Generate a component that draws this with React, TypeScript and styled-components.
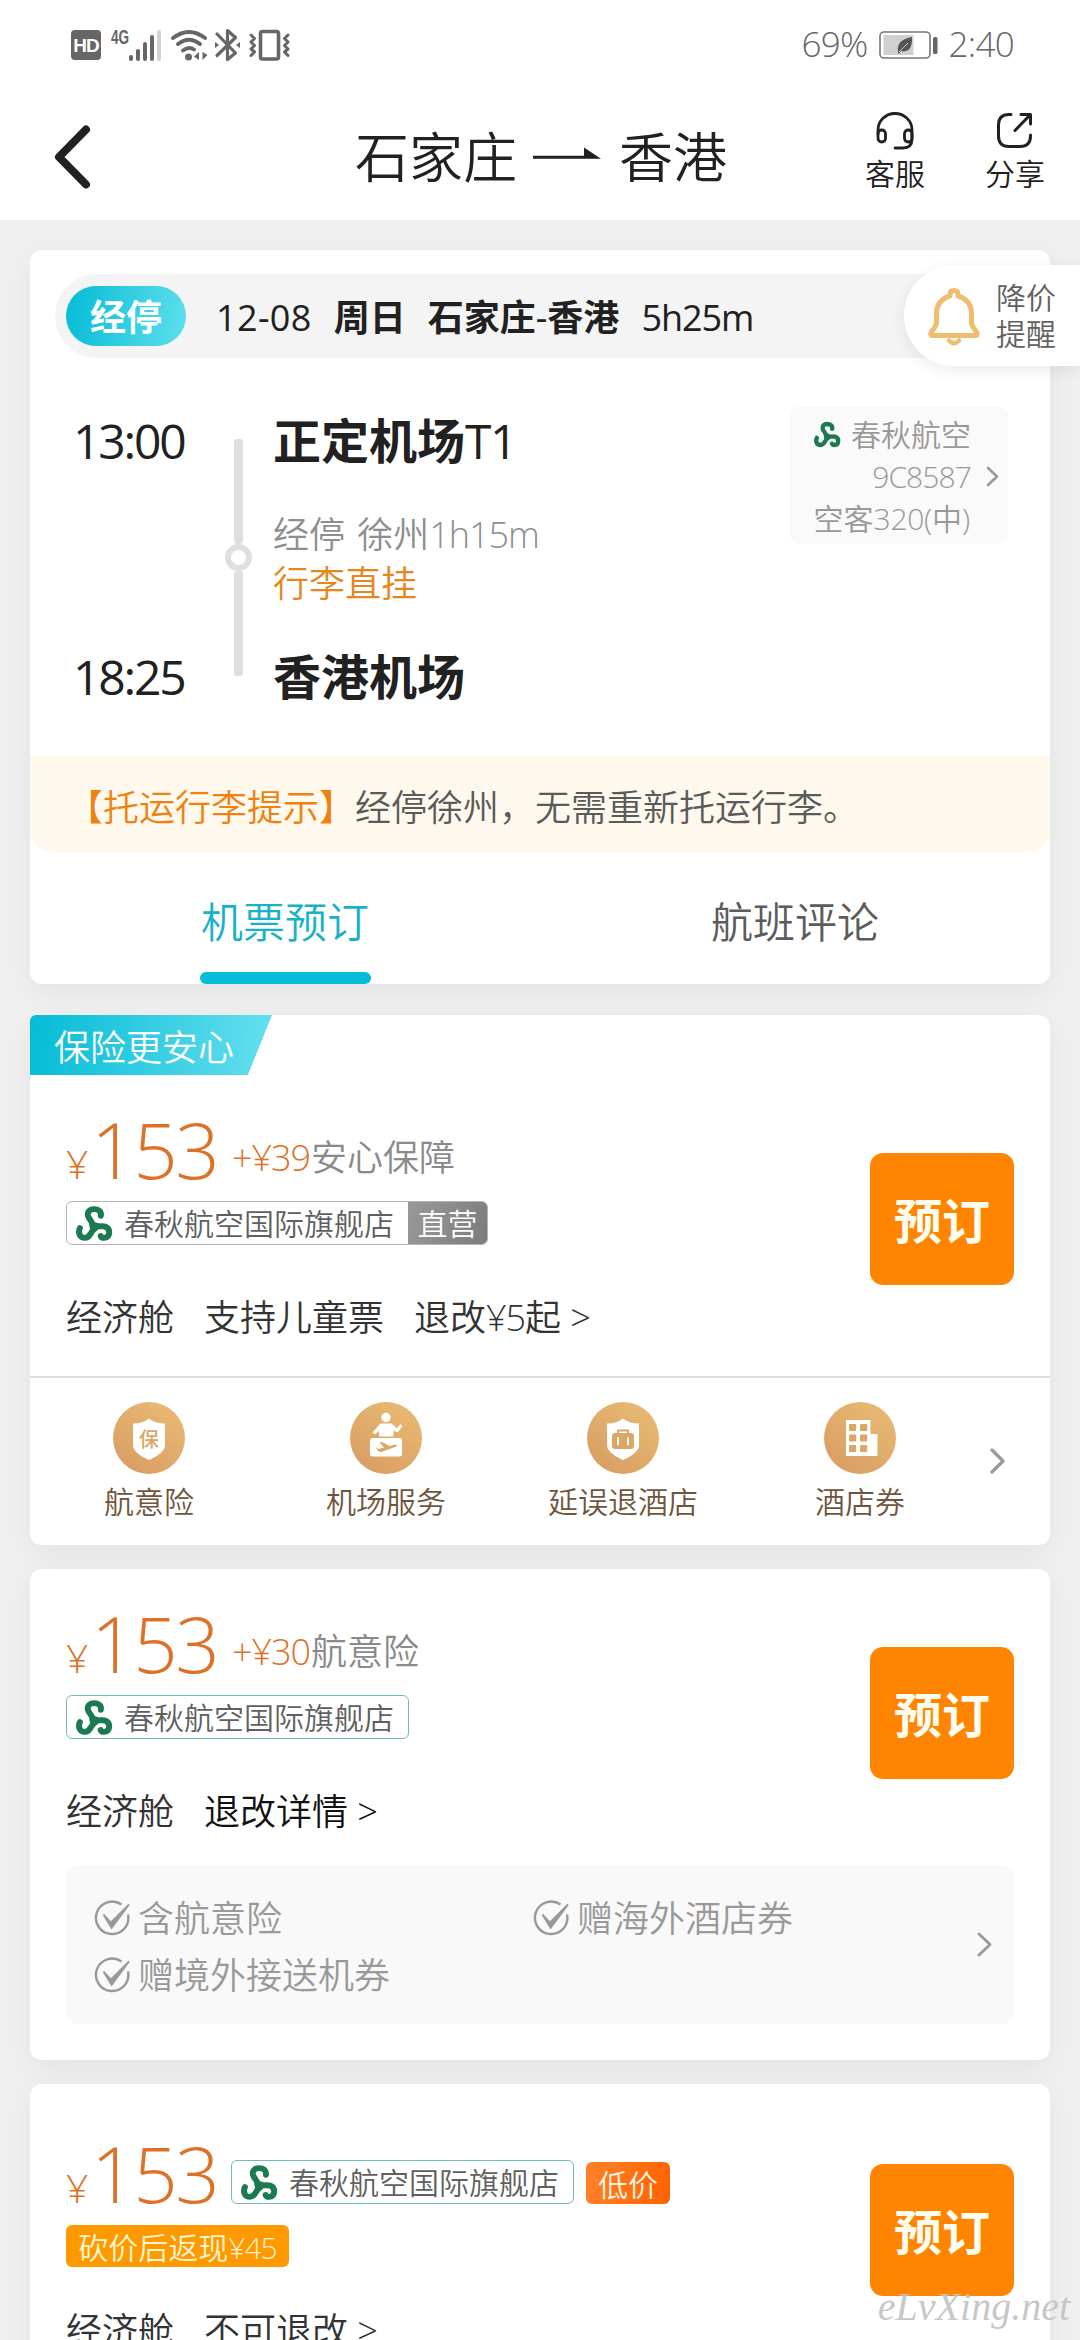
import React from "react";
import styled, { createGlobalStyle, css } from "styled-components";

const Global = createGlobalStyle`
  * { box-sizing: border-box; }
  html, body { margin: 0; background: #f0f0f0; }
  body {
    font-family: "Open Sans", "Noto Sans CJK SC", sans-serif;
    font-weight: 350;
    color: #212121;
    white-space: nowrap;
  }
`;

const Screen = styled.div`
  width: 1080px;
  height: 2340px;
  overflow: hidden;
  position: relative;
  background: #f0f0f0;
`;

const Num = styled.span<{ $track?: number }>`
  letter-spacing: ${(p) => p.$track ?? -0.03}em;
`;

/* ---------- status bar ---------- */

const StatusBar = styled.div`
  height: 90px;
  background: #fff;
  display: flex;
  align-items: center;
  justify-content: space-between;
  padding: 0 66px 0 71px;
  color: #666;
  font-size: 35px;
  font-weight: 300;
`;

const StatusGroup = styled.div`
  display: flex;
  align-items: center;
  line-height: 48px;
`;

const StatusText = styled.span`
  letter-spacing: -0.02em;
  padding-bottom: 2px;
`;

const HdBox = styled.div`
  width: 30px;
  height: 30px;
  border-radius: 4px;
  background: #666;
  color: #fff;
  font: 700 19px/31px "Liberation Sans", sans-serif;
  text-align: center;
  letter-spacing: -1px;
`;

const Network = styled.div`
  font: 700 20px/16px "Liberation Sans", sans-serif;
  width: 18px;
  margin: 0 0 17px 10px;
  transform: scaleX(0.68);
  transform-origin: left;
`;

const BatteryGap = styled.div`
  display: flex;
  margin: 0 10px 0 11px;
`;

/* ---------- header ---------- */

const Header = styled.header`
  height: 130px;
  background: #fff;
  display: flex;
  align-items: center;
  padding: 3px 35px 0 53px;
`;

const Title = styled.h1`
  flex: 1;
  margin: 0 0 0 263px;
  display: flex;
  align-items: center;
  gap: 16px;
  font-size: 54px;
  font-weight: 350;
  line-height: 70px;
`;

const Actions = styled.div`
  display: flex;
  gap: 60px;
  margin-bottom: 10px;
`;

const Action = styled.div`
  width: 60px;
  display: flex;
  flex-direction: column;
  align-items: center;
  font-size: 30px;
  line-height: 36px;
  gap: 6px;
`;

/* ---------- cards ---------- */

const Content = styled.main`
  padding: 30px 30px 0;
  display: flex;
  flex-direction: column;
`;

const Card = styled.section<{ $height: number; $gap: number }>`
  height: ${(p) => p.$height}px;
  margin-bottom: ${(p) => p.$gap}px;
  flex: none;
  background: #fff;
  border-radius: 12px;
  box-shadow: 0 8px 30px rgba(0, 0, 0, 0.06);
`;

const SummaryWrap = styled.div`
  padding-top: 24px;
`;

const Summary = styled.div`
  margin-left: 25px;
  height: 84px;
  border-radius: 42px 0 0 42px;
  background: #f4f4f4;
  display: flex;
  align-items: center;
  padding-left: 11px;
  font-size: 36px;
  line-height: 60px;
  font-weight: 400;
  b { font-weight: 700; }
`;

const StopBadge = styled.span`
  width: 120px;
  height: 60px;
  border-radius: 30px;
  background: linear-gradient(100deg, #04bcd6, #5fdfec);
  color: #fff;
  font-weight: 700;
  line-height: 63px;
  text-align: center;
  margin-right: 30px;
`;

const SummaryPart = styled.span<{ $left?: number }>`
  margin-left: ${(p) => p.$left ?? 0}px;
  padding-top: 3px;
`;

const Route = styled.div`
  height: 398px;
  display: flex;
  padding-top: 48px;
`;

const Times = styled.div`
  width: 195px;
  padding-left: 43px;
  font-size: 48px;
  line-height: 70px;
  font-weight: 400;
  div + div { margin-top: 166px; }
`;

const Rail = styled.div`
  width: 27px;
  margin-top: 33px;
  display: flex;
  flex-direction: column;
  align-items: center;
`;

const RailLine = styled.i`
  width: 9px;
  height: 105px;
  border-radius: 3px;
  background: #dfdfdf;
`;

const RailDot = styled.i`
  width: 27px;
  height: 27px;
  border-radius: 50%;
  border: 6px solid #dfdfdf;
`;

const Stops = styled.div`
  margin-left: 21px;
  flex: 1;
`;

const Airport = styled.div`
  font-size: 48px;
  line-height: 70px;
  font-weight: 700;
  ${Num} { font-weight: 400; }
`;

const StopInfo = styled.div`
  height: 166px;
  padding-top: 34px;
  font-size: 36px;
  line-height: 49px;
  word-spacing: 3px;
  color: #8e8e8e;
`;

const Through = styled.div`
  color: #e6861c;
`;

const FlightBox = styled.div`
  width: 219px;
  height: 138px;
  margin-right: 42px;
  border-radius: 12px;
  background: #fafafa;
  display: flex;
  align-items: center;
  justify-content: flex-end;
  gap: 15px;
  padding: 3px 9px 0 0;
  color: #999;
  font-size: 30px;
  line-height: 42px;
`;

const FlightText = styled.div`
  text-align: right;
`;

const AirlineLine = styled.div`
  display: flex;
  align-items: center;
  justify-content: flex-end;
  gap: 10px;
`;

const Notice = styled.div`
  height: 97px;
  border-radius: 0 0 24px 24px;
  background: #fff8ec;
  padding-left: 37px;
  font-size: 36px;
  line-height: 103px;
  color: #5a5a5a;
  em { font-style: normal; color: #ee8110; }
`;

const Tabs = styled.div`
  display: grid;
  grid-template-columns: 1fr 1fr;
  height: 131px;
`;

const Tab = styled.div<{ $active?: boolean }>`
  display: flex;
  flex-direction: column;
  align-items: center;
  justify-content: space-between;
  font-size: 42px;
  line-height: 137px;
  height: 131px;
  color: ${(p) => (p.$active ? "#18b2c6" : "#5c5c5c")};
`;

const TabLabel = styled.span`
  height: 119px;
`;

const TabBar = styled.i`
  width: 171px;
  height: 12px;
  border-radius: 6px;
  background: #04bcd6;
`;

/* ---------- price alert ---------- */

const PriceAlert = styled.aside`
  position: absolute;
  right: 0;
  top: 265px;
  width: 176px;
  height: 101px;
  border-radius: 51px 0 0 51px;
  background: #fff;
  box-shadow: 0 4px 16px rgba(0, 0, 0, 0.08);
  display: flex;
  align-items: center;
  gap: 15px;
  padding-left: 23px;
  font-size: 30px;
  line-height: 36px;
  color: #616161;
`;

/* ---------- offers ---------- */

const Ribbon = styled.div`
  width: 242px;
  height: 60px;
  border-radius: 6px 0 0 0;
  background: linear-gradient(95deg, #04bcd6, #66dfef);
  clip-path: polygon(0 0, 100% 0, 90% 100%, 0 100%);
  color: #fff;
  padding-left: 24px;
  font-size: 36px;
  line-height: 66px;
`;

const OfferBody = styled.div`
  display: flex;
  justify-content: space-between;
  padding: 0 36px;
`;

const OfferMain = styled.div<{ $top: number }>`
  padding-top: ${(p) => p.$top}px;
`;

const PriceRow = styled.div`
  height: 72px;
  display: flex;
  align-items: baseline;
  line-height: 72px;
  color: #dd7127;
  font-size: 36px;
`;

const Yen = styled.span`
  width: 25px;
  font-size: 39px;
  font-weight: 300;
`;

const Amount = styled.span`
  width: 140px;
  font-size: 78px;
  letter-spacing: -0.03em;
`;

const Extra = styled.span`
  position: relative;
  bottom: 8px;
  padding-left: 1px;
`;

const Muted = styled.span`
  color: #8a8a8a;
  padding-left: 1px;
`;

const StoreTag = styled.div<{ $tone: string; $inline?: boolean }>`
  display: flex;
  width: fit-content;
  height: 44px;
  border: 1.5px solid ${(p) => p.$tone};
  border-radius: 6px;
  overflow: hidden;
  font-size: 30px;
  line-height: 43px;
  color: #5f5f5f;
  ${(p) =>
    p.$inline
      ? css`align-self: flex-end; margin-bottom: 5px;`
      : css`margin-top: 16px;`}
`;

const StoreName = styled.span`
  display: flex;
  align-items: center;
  gap: 11px;
  padding: 0 14px 0 9px;
`;

const Direct = styled.span`
  width: 79px;
  text-align: center;
  color: #fff;
  background: linear-gradient(110deg, #999, #7c7c7c);
`;

const LowPrice = styled.span`
  align-self: flex-end;
  margin: 0 0 5px 12px;
  width: 84px;
  height: 42px;
  border-radius: 6px;
  text-align: center;
  font-size: 30px;
  line-height: 45px;
  color: #fff3e2;
  background: linear-gradient(100deg, #ff8129, #ff6200);
`;

const Cashback = styled.div`
  width: 223px;
  height: 42px;
  margin-top: 16px;
  border-radius: 6px;
  background: #ff9900;
  color: #fff6cf;
  text-align: center;
  font-size: 30px;
  line-height: 45px;
`;

const Details = styled.div<{ $top: number; $dark?: boolean }>`
  display: flex;
  gap: 30px;
  margin-top: ${(p) => p.$top}px;
  font-size: 36px;
  line-height: 50px;
  color: #333;
  > span:last-child { color: ${(p) => (p.$dark ? "#111" : "#333")}; }
`;

const Book = styled.button<{ $top: number }>`
  width: 144px;
  height: 132px;
  margin: ${(p) => p.$top}px 0 0;
  padding: 4px 0 0;
  border: 0;
  border-radius: 13px;
  background: #ff8500;
  color: #fffdf0;
  font: 700 48px/60px "Open Sans", "Noto Sans CJK SC", sans-serif;
`;

const Services = styled.div`
  margin-top: 33px;
  height: 169px;
  border-top: 2px solid #dedede;
  display: flex;
  align-items: flex-start;
  padding: 24px 45px 0 0.5px;
`;

const Service = styled.div`
  width: 237px;
  display: flex;
  flex-direction: column;
  align-items: center;
  gap: 8px;
  font-size: 30px;
  line-height: 40px;
  color: #6f553c;
`;

const Disc = styled.div`
  width: 72px;
  height: 72px;
  border-radius: 50%;
  background: linear-gradient(215deg, #eabd74, #d79a62);
  display: flex;
`;

const ServiceArrow = styled.div`
  margin: 46px 0 0 auto;
  display: flex;
`;

const Perks = styled.div`
  margin: 28px 36px 0;
  height: 159px;
  border-radius: 12px;
  background: #f9f9f9;
  display: flex;
  align-items: center;
  padding: 0 22px 0 28px;
`;

const PerkGrid = styled.div`
  flex: 1;
  display: grid;
  grid-template-columns: 439px 1fr;
  grid-auto-rows: 57px;
  padding-top: 4px;
`;

const Perk = styled.div`
  display: flex;
  align-items: center;
  gap: 8px;
  font-size: 36px;
  line-height: 57px;
  color: #999;
`;

const Watermark = styled.div`
  position: absolute;
  right: 10px;
  bottom: 8px;
  color: rgba(196, 196, 196, 0.95);
  font: italic 400 40px/50px "Liberation Serif", serif;
`;

/* ---------- drawings ---------- */

const Logo = ({ w }: { w: number }) => (
  <svg width={w} height={w} viewBox="0 0 36 34" fill="none" stroke="#1b7a50" strokeWidth="5.8" strokeLinecap="round">
    <path d="M24.2 9.5C25 5.2 21.500 3 17.500 3C13 3 10.800 6 11.600 9.600C12.400 13 16.500 15 16 19" />
    <path d="M3.800 21.500C1.800 25.500 3.400 31 8.600 31C14.500 31 13.500 24.500 19 21.500" />
    <path d="M18 18.600C22 21 25 19 28.400 20C34 22 33.500 31 27.400 31C25.400 31 24.400 30.400 24 29.200" />
    <path d="M14 16.500L23 19.500L15 26Z" fill="#1b7a50" strokeWidth="2" />
  </svg>
);

const Chevron = ({ w, h, sw = 3.2 }: { w: number; h: number; sw?: number }) => (
  <svg width={w} height={h} viewBox={`0 0 ${w} ${h}`} fill="none" stroke="#999" strokeWidth={sw} strokeLinecap="round" strokeLinejoin="round">
    <path d={`M2 2L${w - 2} ${h / 2}L2 ${h - 2}`} />
  </svg>
);

const CheckMark = () => (
  <svg width="36" height="36" viewBox="0 0 36 36" fill="none" stroke="#999" strokeWidth="2.4">
    <path d="M27.500 4.600A16.200 16.200 0 1 0 34 14.500" />
    <path d="M9.500 14.500L17 22.500L35 4.500L17.600 28L9.500 14.500Z" fill="#999" strokeWidth="1.8" />
  </svg>
);

const SignalIcons = () => (
  <svg width="161" height="36" viewBox="129 26 161 36" fill="none" stroke="#666" strokeLinecap="round">
    <g strokeWidth="4">
      <path d="M131 56V58M138 50V58M145 43V58M152 36V58" />
      <path d="M159 31V58" stroke="#d2d2d2" />
    </g>
    <g strokeWidth="3.8">
      <path d="M173 37Q189 25 205 37M178 43Q189 34.5 200 43M183 49.5Q189 45 194 48.5" />
    </g>
    <circle cx="188.500" cy="56" r="3.500" fill="#666" stroke="none" />
    <path d="M199 51L194 55.500L199 59ZM202.500 51L207.500 54L202.500 59Z" fill="#666" stroke="none" />
    <path d="M217 33L235.500 52L227.500 58.500V29.500L235.500 36.500L217 54.500" strokeWidth="3.200" strokeLinejoin="round" />
    <path d="M215 41L219 44L215 47ZM240 41L236 44L240 47Z" fill="#666" stroke="none" />
    <rect x="260.500" y="30.500" width="18" height="27.500" rx="2" strokeWidth="3.600" />
    <path d="M251 34L254.500 37.500L251 41L254.500 44.500L251 48L254.500 51L251 54.500M288 34L284.500 37.500L288 41L284.500 44.500L288 48L284.500 51L288 54.500" strokeWidth="3" strokeLinejoin="round" />
  </svg>
);

const Battery = () => (
  <svg width="60" height="30" viewBox="0 0 60 30">
    <rect x="1" y="2" width="50" height="26" rx="4" fill="none" stroke="#777" strokeWidth="1.6" />
    <rect x="4.500" y="5" width="30" height="20" fill="#d0d0d0" />
    <path d="M33 7C33.500 17 30 23 22 21L20 24L19 22.500C17.500 12 24 9 33 7Z" fill="#555" />
    <path d="M20 22Q25 17 29 13" stroke="#d0d0d0" strokeWidth="1" fill="none" />
    <rect x="54" y="7" width="4.500" height="17" rx="1.500" fill="#666" />
  </svg>
);

const BackIcon = () => (
  <svg width="39" height="66" viewBox="0 0 39 66" fill="none" stroke="#212121" strokeWidth="8" strokeLinecap="round" strokeLinejoin="round">
    <path d="M33 5.500L6 33L33 60.500" />
  </svg>
);

const TitleArrow = () => (
  <svg width="70" height="20" viewBox="0 0 70 20" fill="#212121">
    <path d="M0 8.800H51V0.500L68 11.800H0Z" />
  </svg>
);

const Headset = () => (
  <svg width="40" height="38" viewBox="0 0 40 38" fill="none" stroke="#212121" strokeWidth="2.800" strokeLinecap="round">
    <path d="M3 22V18A17 16.500 0 0 1 37 18V27Q37 36 28 36H20" />
    <rect x="3" y="18" width="7.500" height="12" rx="3.700" />
    <rect x="29.500" y="18" width="7.500" height="12" rx="3.700" />
  </svg>
);

const ShareIcon = () => (
  <svg width="38" height="38" viewBox="0 0 38 38" fill="none" stroke="#212121" strokeWidth="3" strokeLinecap="round" strokeLinejoin="round">
    <path d="M15 2.500H13Q2.500 2.500 2.500 13V24Q2.500 34.500 13 34.500H24Q34.500 34.500 34.500 24V23" />
    <path d="M25 2.500H34.500V12M34 3L19 18.500" />
  </svg>
);

const Bell = () => (
  <svg width="54" height="60" viewBox="0 0 54 60" fill="none" stroke="#f0bd70" strokeWidth="5" strokeLinecap="round" strokeLinejoin="round">
    <path d="M23 10V8Q23 4.500 27 4.500Q31 4.500 31 8V10Q44.500 14 44.500 28V37Q45 40.500 49 45Q52 49.500 47.500 49.500H6.500Q2 49.500 5 45Q9 40.500 9.500 37V28Q9.500 14 23 10Z" />
    <path d="M22 54.500Q27 60 32 54.500" strokeWidth="4.500" />
  </svg>
);

const shield = "M36 16.500Q42 21.500 52 21.500V43Q52 51 36 58Q20 51 20 43V21.500Q30 21.500 36 16.500Z";

const ShieldText = styled.text`
  font: 500 20px "Noto Sans CJK SC", sans-serif;
`;

const serviceArt: Record<string, React.ReactNode> = {
  shield: (
    <>
      <path d={shield} fill="#fff" />
      <ShieldText x="36" y="44.500" textAnchor="middle" fill="#dca666">保</ShieldText>
    </>
  ),
  airport: (
    <>
      <circle cx="36" cy="15.500" r="4.700" fill="#fff" />
      <path d="M30.500 22H41.500L47 27L50.500 22.500L52 24L47.500 30L43 27.500V34H29.500V28L25 32L23 30.500Z" fill="#fff" stroke="#fff" strokeLinejoin="round" />
      <rect x="20" y="36" width="32" height="18.500" rx="2.500" fill="#fff" />
      <path d="M26 45L28.500 47L34 45.500L29.500 40.500L32 40L39.500 44L45 42.500Q47.500 42.500 46.500 44.500L31 50Q27.500 50 26 45Z" fill="#dca666" />
    </>
  ),
  luggage: (
    <>
      <path d={shield} fill="#fff" />
      <path d="M31 32V28.500H41V32" fill="none" stroke="#dca666" strokeWidth="2" />
      <rect x="25" y="31" width="22" height="16" rx="3" fill="#dca666" />
      <path d="M31 36V42.500M41 36V42.500" stroke="#fff" strokeWidth="2" strokeLinecap="round" />
    </>
  ),
  hotel: (
    <>
      <path d="M22 18H46.500V32H53.500V54H22Z" fill="#fff" />
      {[22, 32.5, 43].map((y) =>
        [25, 36].map((x) => <rect key={`${x}-${y}`} x={x} y={y} width="7.200" height="7" rx="1" fill="#dca666" />)
      )}
    </>
  ),
};

const services = [
  { art: "shield", label: "航意险" },
  { art: "airport", label: "机场服务" },
  { art: "luggage", label: "延误退酒店" },
  { art: "hotel", label: "酒店券" },
];

const perks = ["含航意险", "赠海外酒店券", "赠境外接送机券"];

const Store = ({ tone, direct, inline }: { tone: string; direct?: boolean; inline?: boolean }) => (
  <StoreTag $tone={tone} $inline={inline}>
    <StoreName>
      <Logo w={37} />
      春秋航空国际旗舰店
    </StoreName>
    {direct && <Direct>直营</Direct>}
  </StoreTag>
);

const Price = () => (
  <>
    <Yen>¥</Yen>
    <Amount>153</Amount>
  </>
);

export default function App() {
  return (
    <Screen>
      <Global />
      <StatusBar>
        <StatusGroup>
          <HdBox>HD</HdBox>
          <Network>4G</Network>
          <SignalIcons />
        </StatusGroup>
        <StatusGroup>
          <StatusText>69%</StatusText>
          <BatteryGap><Battery /></BatteryGap>
          <StatusText>2:40</StatusText>
        </StatusGroup>
      </StatusBar>
      <Header>
        <BackIcon />
        <Title>
          石家庄
          <TitleArrow />
          香港
        </Title>
        <Actions>
          <Action><Headset />客服</Action>
          <Action><ShareIcon />分享</Action>
        </Actions>
      </Header>

      <Content>
        <Card $height={734} $gap={31}>
          <SummaryWrap>
            <Summary>
              <StopBadge>经停</StopBadge>
              <SummaryPart><Num $track={0.01}>12-08</Num></SummaryPart>
              <SummaryPart $left={22}><b>周日</b></SummaryPart>
              <SummaryPart $left={22}><b>石家庄</b>-<b>香港</b></SummaryPart>
              <SummaryPart $left={22}><Num>5h25m</Num></SummaryPart>
            </Summary>
          </SummaryWrap>
          <Route>
            <Times>
              <div><Num $track={-0.045}>13:00</Num></div>
              <div><Num $track={-0.045}>18:25</Num></div>
            </Times>
            <Rail>
              <RailLine />
              <RailDot />
              <RailLine />
            </Rail>
            <Stops>
              <Airport>正定机场<Num>T1</Num></Airport>
              <StopInfo>
                经停 徐州<Num>1h15m</Num>
                <Through>行李直挂</Through>
              </StopInfo>
              <Airport>香港机场</Airport>
            </Stops>
            <FlightBox>
              <FlightText>
                <AirlineLine><Logo w={27} />春秋航空</AirlineLine>
                <div><Num>9C8587</Num></div>
                <div>空客<Num $track={-0.01}>320(</Num>中<Num $track={0.03}>)</Num></div>
              </FlightText>
              <Chevron w={13} h={21} sw={2.6} />
            </FlightBox>
          </Route>
          <Notice><em>【托运行李提示】</em>经停徐州，无需重新托运行李。</Notice>
          <Tabs>
            <Tab $active><TabLabel>机票预订</TabLabel><TabBar /></Tab>
            <Tab><TabLabel>航班评论</TabLabel></Tab>
          </Tabs>
        </Card>

        <Card $height={530} $gap={24}>
          <Ribbon>保险更安心</Ribbon>
          <OfferBody>
            <OfferMain $top={38}>
              <PriceRow>
                <Price />
                <Extra><Num>+¥39</Num><Muted>安心保障</Muted></Extra>
              </PriceRow>
              <Store tone="#b5b5b5" direct />
              <Details $top={48}>
                <span>经济舱</span>
                <span>支持儿童票</span>
                <span>退改<Num>¥5</Num>起 &gt;</span>
              </Details>
            </OfferMain>
            <Book $top={78}>预订</Book>
          </OfferBody>
          <Services>
            {services.map((s) => (
              <Service key={s.label}>
                <Disc><svg width="72" height="72" viewBox="0 0 72 72">{serviceArt[s.art]}</svg></Disc>
                {s.label}
              </Service>
            ))}
            <ServiceArrow><Chevron w={15} h={26} /></ServiceArrow>
          </Services>
        </Card>

        <Card $height={491} $gap={24}>
          <OfferBody>
            <OfferMain $top={38}>
              <PriceRow>
                <Price />
                <Extra><Num>+¥30</Num><Muted>航意险</Muted></Extra>
              </PriceRow>
              <Store tone="#6fbcba" />
              <Details $top={48} $dark>
                <span>经济舱</span>
                <span>退改详情 &gt;</span>
              </Details>
            </OfferMain>
            <Book $top={78}>预订</Book>
          </OfferBody>
          <Perks>
            <PerkGrid>
              {perks.map((p) => <Perk key={p}><CheckMark />{p}</Perk>)}
            </PerkGrid>
            <Chevron w={15} h={25} sw={2.8} />
          </Perks>
        </Card>

        <Card $height={400} $gap={0}>
          <OfferBody>
            <OfferMain $top={53}>
              <PriceRow>
                <Price />
                <Store tone="#6fbcba" inline />
                <LowPrice>低价</LowPrice>
              </PriceRow>
              <Cashback>砍价后返现<Num>¥45</Num></Cashback>
              <Details $top={39}>
                <span>经济舱</span>
                <span>不可退改 &gt;</span>
              </Details>
            </OfferMain>
            <Book $top={80}>预订</Book>
          </OfferBody>
        </Card>
      </Content>

      <PriceAlert>
        <Bell />
        <div>降价<br />提醒</div>
      </PriceAlert>
      <Watermark>eLvXing.net</Watermark>
    </Screen>
  );
}
